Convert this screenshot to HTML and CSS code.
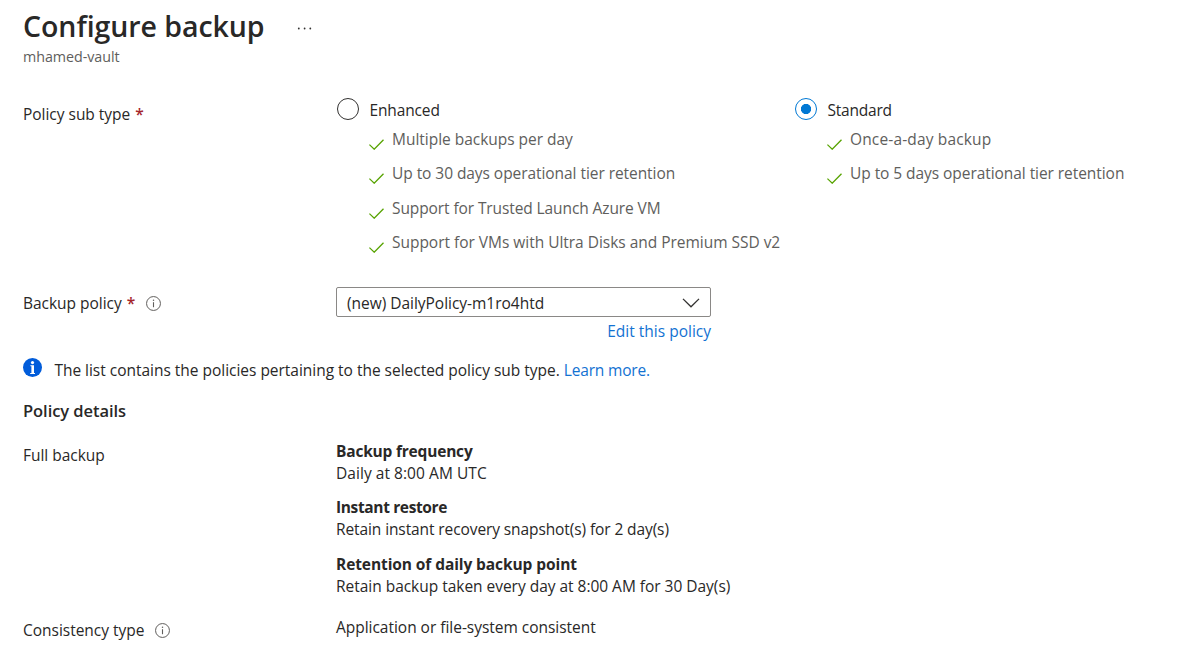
FILE: index.html
```html
<!DOCTYPE html>
<html lang="en">
<head>
<meta charset="utf-8">
<title>Configure backup</title>
<link rel="stylesheet" href="styles.css">
</head>
<body>
<svg class="defs" width="0" height="0" aria-hidden="true">
  <symbol id="check" viewBox="0 0 15 11"><path d="M0.4 5.6 L5.2 10.2 L14.5 0.7" fill="none" stroke="#57a300" stroke-width="1.3"/></symbol>
  <symbol id="info" viewBox="0 0 15 15"><circle cx="7.5" cy="7.5" r="6.95" fill="none" stroke="#605e5c" stroke-width="1"/><path d="M7.5 6.2V11.2" stroke="#605e5c" stroke-width="1.1"/><circle cx="7.5" cy="4.3" r=".75" fill="#605e5c"/></symbol>
</svg>
<main class="page">
  <header class="header">
    <div class="title-row">
      <h1 class="title">Configure backup</h1>
      <svg class="more" width="15" height="3" viewBox="0 0 15 3"><g fill="#323130"><circle cx="1.8" cy="1.5" r=".9"/><circle cx="7.6" cy="1.5" r=".9"/><circle cx="13.3" cy="1.5" r=".9"/></g></svg>
    </div>
    <p class="subtitle">mhamed-vault</p>
  </header>

  <section class="row subtype">
    <div class="label">Policy sub type<span class="required">*</span></div>
    <div class="options">
      <div class="option">
        <div class="radio-row"><span class="radio"></span><span class="radio-text w-enhanced">Enhanced</span></div>
        <ul class="features">
          <li><svg class="check"><use href="#check"/></svg><span>Multiple backups per day</span></li>
          <li><svg class="check"><use href="#check"/></svg><span class="w-tier">Up to 30 days operational tier retention</span></li>
          <li><svg class="check"><use href="#check"/></svg><span class="w-trusted">Support for Trusted Launch Azure VM</span></li>
          <li><svg class="check"><use href="#check"/></svg><span>Support for VMs with Ultra Disks and Premium SSD v2</span></li>
        </ul>
      </div>
      <div class="option">
        <div class="radio-row"><span class="radio selected"></span><span class="radio-text w-standard">Standard</span></div>
        <ul class="features">
          <li><svg class="check"><use href="#check"/></svg><span class="w-once">Once-a-day backup</span></li>
          <li><svg class="check"><use href="#check"/></svg><span class="w-tier">Up to 5 days operational tier retention</span></li>
        </ul>
      </div>
    </div>
  </section>

  <section class="row policy">
    <div class="label"><span>Backup policy</span><span class="required">*</span><svg class="info"><use href="#info"/></svg></div>
    <div class="field">
      <div class="select"><span>(new) DailyPolicy-m1ro4htd</span>
        <svg width="18" height="10" viewBox="0 0 18 10"><path d="M1 .9 L9 8.8 L17 .9" fill="none" stroke="#323130" stroke-width="1.3"/></svg>
      </div>
      <a class="link edit">Edit this policy</a>
    </div>
  </section>

  <div class="notice">
    <svg width="19" height="19" viewBox="0 0 19 19"><circle cx="9.5" cy="9.5" r="9.5" fill="#015cda"/><path d="M7.4 7.2H11V15H12V16H7.2V15H8.4V8.2H7.4Z" fill="#fff"/><circle cx="9.5" cy="4.6" r="1.6" fill="#fff"/></svg>
    <p>The list contains the policies pertaining to the selected policy sub type. <a class="link learn">Learn more.</a></p>
  </div>

  <h2 class="section-title">Policy details</h2>

  <section class="row full">
    <div class="label">Full backup</div>
    <dl class="details">
      <div><dt class="w-frequency">Backup frequency</dt><dd class="w-daily">Daily at 8:00 AM UTC</dd></div>
      <div><dt class="w-instant">Instant restore</dt><dd class="w-retain">Retain instant recovery snapshot(s) for 2 day(s)</dd></div>
      <div><dt class="w-retention">Retention of daily backup point</dt><dd>Retain backup taken every day at 8:00 AM for 30 Day(s)</dd></div>
    </dl>
  </section>

  <section class="row consistency">
    <div class="label">Consistency type<svg class="info"><use href="#info"/></svg></div>
    <div>Application or file-system consistent</div>
  </section>
</main>
</body>
</html>
```
FILE: styles.css
```css
* { box-sizing: border-box; margin: 0; padding: 0; }
body {
  background: #fff;
  color: #292827;
  font: 15.5px/20px "Open Sans", "Noto Sans", sans-serif;
  letter-spacing: -.025px;
  overflow: hidden;
}
svg { display: block; flex: none; }
.defs { position: absolute; }
.page { padding: 8px 0 0 23px; }
.title-row { display: flex; align-items: center; gap: 32px; height: 36px; }
.title { font-size: 28.5px; line-height: 36px; font-weight: 600; letter-spacing: -.06px; white-space: nowrap; }
.more { margin-top: 4px; }
.subtitle { margin-top: 3px; font-size: 14.3px; letter-spacing: -.05px; color: #605e5c; }

.row { display: grid; grid-template-columns: 313px 1fr; white-space: nowrap; }
.label { display: flex; align-items: flex-start; }
.required { margin-left: 5px; color: #a4262c; font-weight: 600; }
.info { width: 15px; height: 15px; margin: 3px 0 0 11px; }

.subtype { margin-top: 31px; }
.subtype .label { padding-top: 6px; }
.options { display: grid; grid-template-columns: 458px 1fr; padding-left: 1px; }
.radio-row { display: flex; gap: 10.4px; height: 22px; }
.radio { width: 22px; height: 22px; border: 1px solid #323130; border-radius: 50%; }
.radio.selected { border-color: #0078d4; background: radial-gradient(circle, #0078d4 4.8px, transparent 5.4px); }
.radio-text { padding-top: 2px; }
.features { list-style: none; margin: 9px 0 0 32px; color: #605e5c; }
.features li { display: flex; gap: 8px; height: 34.4px; }
.check { width: 15px; height: 11px; margin-top: 10px; }

.policy { margin-top: 20.4px; }
.policy .label { padding-top: 6px; }
.field { width: 375px; display: flex; flex-direction: column; }
.select {
  display: flex; justify-content: space-between; align-items: center;
  height: 30px; padding: 2px 10px 0; border: 1px solid #8a8886; border-radius: 2px;
}
.link { color: #1372d2; }
.edit { align-self: flex-end; margin-top: 4px; letter-spacing: 0; }

.notice { display: flex; gap: 12.4px; margin-top: 17px; letter-spacing: -.02px; white-space: nowrap; }
.notice p { padding-top: 2px; }
.learn { letter-spacing: -.18px; }
.section-title { margin-top: 21px; font-size: 16.5px; line-height: 20px; font-weight: 600; letter-spacing: -.06px; }

.full { margin-top: 19px; line-height: 22px; }
.full .label { padding-top: 4px; }
.details { display: grid; gap: 12.5px; }
dt { font-weight: 700; }
.consistency { margin-top: 20px; }
.consistency .label { padding-top: 3px; }

.w-enhanced { letter-spacing: -.12px; }
.w-standard { letter-spacing: -.2px; }
.w-tier { letter-spacing: -.06px; }
.w-trusted { letter-spacing: -.1px; }
.w-once { letter-spacing: .15px; }
.w-frequency { letter-spacing: -.2px; }
.w-daily { letter-spacing: .05px; }
.w-instant { letter-spacing: -.36px; }
.w-retain { letter-spacing: -.1px; }
.w-retention { letter-spacing: -.09px; }
```
